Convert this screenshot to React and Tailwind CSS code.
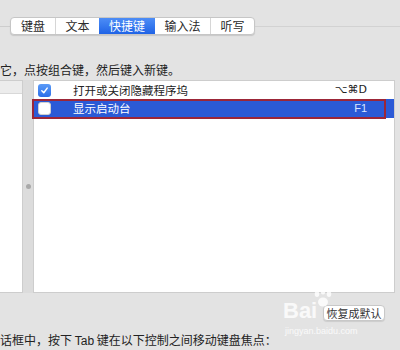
export default function App() {
  const tabs = [
    { label: '键盘', w: 'w-[44px]' },
    { label: '文本', w: 'w-[44px]' },
    { label: '快捷键', w: 'w-[56px]', active: true },
    { label: '输入法', w: 'w-[55px]' },
    { label: '听写', w: 'w-[44px]' },
  ]

  return (
    <div className="relative w-[400px] h-[350px] overflow-hidden bg-[#e3e3e3] text-[#222] font-['Noto_Sans_CJK_SC','Liberation_Sans',sans-serif]">
      {/* Tab bar */}
      <div className="flex items-center pt-[17px]">
        <div className="w-[10px] h-px bg-[#cdcdcd]" />
        <div className="flex h-[18px] rounded-[4px] border border-[#c6c6c6] bg-white shadow-[0_1px_1px_rgba(0,0,0,0.12)] overflow-hidden">
          {tabs.map((t, i) => (
            <div
              key={t.label}
              className={`${t.w} flex items-center justify-center text-[12px] leading-none ${
                t.active
                  ? 'bg-gradient-to-b from-[#4d8df6] to-[#1f63e6] text-white'
                  : 'text-[#2b2b2b]'
              } ${i > 0 && !t.active && !tabs[i - 1].active ? 'border-l border-[#d6d6d6]' : ''}`}
            >
              {t.label}
            </div>
          ))}
        </div>
        <div className="flex-1 h-px bg-[#d2d2d2]" />
      </div>

      <p className="mt-[27px] text-[12px] leading-[16px] whitespace-nowrap">
        它，点按组合键，然后键入新键。
      </p>

      {/* Panels */}
      <div className="flex mt-[2px] h-[213px]">
        <div className="w-[23px] flex flex-col bg-white border-y border-r border-[#cdcdcd]">
          <div className="h-[13px] bg-[#ececec] border-b border-[#d8d8d8]" />
        </div>

        <div className="w-[10px] flex items-center justify-center bg-[#dcdcdc]">
          <div className="w-[5px] h-[5px] rounded-full bg-[#a9a9a9]" />
        </div>

        <div className="w-[362px] flex flex-col bg-white border border-[#cdcdcd] pt-[1px]">
          <div className="h-[17px] flex items-center text-[11.5px]">
            <div className="ml-[4px] w-[13px] h-[13px] rounded-[3px] bg-gradient-to-b from-[#5a9af7] to-[#2b6ee8] flex items-center justify-center">
              <svg width="9" height="9" viewBox="0 0 10 10" fill="none">
                <path d="M2 5.3 L4.2 7.5 L8 2.3" stroke="white" strokeWidth="1.6" strokeLinecap="round" strokeLinejoin="round" />
              </svg>
            </div>
            <span className="ml-[22px]">打开或关闭隐藏程序坞</span>
            <span className="ml-auto mr-[27px] text-[11px] font-['DejaVu_Sans',sans-serif]">⌥⌘D</span>
          </div>

          <div className="relative h-[19px] flex items-center bg-[#2b5ad6] text-white text-[11.5px]">
            <div className="ml-[4px] w-[13px] h-[13px] rounded-[3px] bg-white border border-[#d0d0d0]" />
            <span className="ml-[22px]">显示启动台</span>
            <span className="ml-auto mr-[27px] text-[11px] text-[#dbe6ff] font-['Liberation_Sans',sans-serif]">F1</span>
            <div className="absolute left-[-2px] top-0 bottom-[-1px] w-[354px] border-2 border-[#9c2638]" />
          </div>
        </div>
      </div>

      {/* Restore button */}
      <div className="flex justify-end mt-[12px] pr-[15px]">
        <div className="w-[62px] h-[16px] flex items-center justify-center rounded-[4px] bg-white border border-[#c8c8c8] shadow-[0_1px_1px_rgba(0,0,0,0.1)] text-[11px] text-[#333]">
          恢复成默认
        </div>
      </div>

      <p className="mt-[11px] text-[12px] leading-[16px] whitespace-nowrap">
        话框中，按下 <span className="font-['Liberation_Sans',sans-serif]">Tab</span> 键在以下控制之间移动键盘焦点：
      </p>

      {/* Watermark */}
      <div className="absolute left-[283px] top-[300px] text-[22px] font-bold leading-none text-white/80 font-['Liberation_Sans',sans-serif]">
        Bai
      </div>
      <svg className="absolute left-[312px] top-[288px]" width="22" height="20" viewBox="0 0 22 20">
        <g fill="white" fillOpacity="0.8">
          <ellipse cx="5" cy="6" rx="2.3" ry="3" />
          <ellipse cx="11" cy="3.5" rx="2.3" ry="3" />
          <ellipse cx="17" cy="6" rx="2.3" ry="3" />
          <ellipse cx="11" cy="14" rx="5" ry="4.5" />
        </g>
      </svg>
      <div className="absolute left-[285px] top-[327px] text-[9px] leading-none text-white/80 font-['Liberation_Sans',sans-serif]">
        jingyan.baidu.com
      </div>
    </div>
  )
}
